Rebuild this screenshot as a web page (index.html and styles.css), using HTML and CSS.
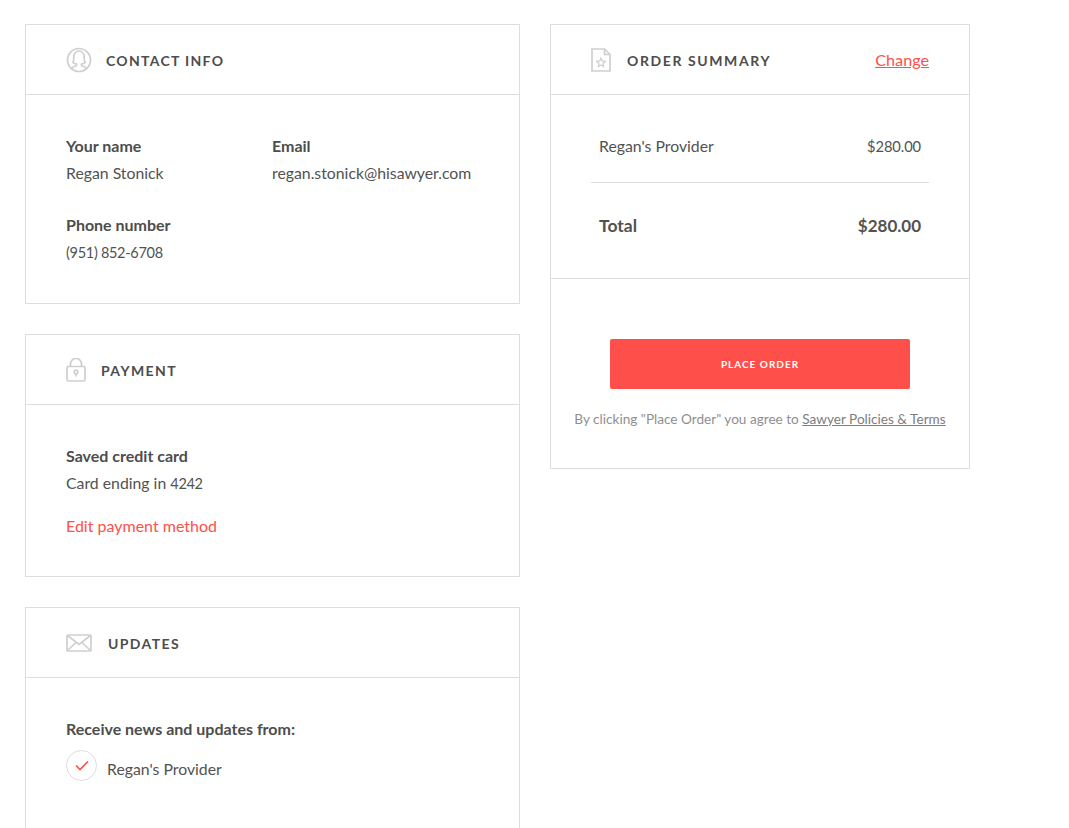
FILE: index.html
```html
<!DOCTYPE html>
<html lang="en">
<head>
<meta charset="utf-8">
<title>Checkout</title>
<link rel="stylesheet" href="styles.css">
</head>
<body>
<main class="layout">
  <div class="col col-left">
    <section class="card card-contact">
      <header class="card-head head-contact">
        <svg class="icon" width="26" height="26" viewBox="0 0 26 26" fill="none" stroke="#cfcfcf" stroke-width="1.7"><circle cx="13" cy="13" r="11.500"/><path d="M5.500 22.500c.2-2 2-3 5-3.800v-1.700c-1.800-.2-3-.7-3.700-1.500 1-1 1-3 1-5C7.800 6.500 10 4 13 4s5.200 2.500 5.200 6.500c0 2 0 4 1 5-.7.8-1.900 1.300-3.700 1.500v1.700c3 .8 4.800 1.800 5 3.800"/></svg>
        <h2 class="card-title">CONTACT INFO</h2>
      </header>
      <div class="card-body body-contact">
        <div class="info-grid">
          <div class="field">
            <div class="label">Your name</div>
            <div class="value">Regan Stonick</div>
          </div>
          <div class="field">
            <div class="label">Email</div>
            <div class="value">regan.stonick@hisawyer.com</div>
          </div>
          <div class="field">
            <div class="label">Phone number</div>
            <div class="value"><span class="num">(951) 852-6708</span></div>
          </div>
        </div>
      </div>
    </section>

    <section class="card card-payment">
      <header class="card-head head-payment">
        <svg class="icon" width="20" height="24" viewBox="0 0 20 24" fill="none" stroke="#cfcfcf" stroke-width="1.7"><rect x="1" y="8.500" width="18" height="14.500" rx="1.500"/><path d="M4.500 8.500V6a5.500 5.500 0 0 1 11 0v2.500"/><circle cx="10" cy="14" r="1.800"/><path d="M10 15.800v2.700"/></svg>
        <h2 class="card-title">PAYMENT</h2>
      </header>
      <div class="card-body body-payment">
        <div class="label">Saved credit card</div>
        <div class="value">Card ending in <span class="num">4242</span></div>
        <a class="edit-link" href="#">Edit payment method</a>
      </div>
    </section>

    <section class="card card-updates">
      <header class="card-head head-updates">
        <svg class="icon" width="26" height="18" viewBox="0 0 26 18" fill="none" stroke="#cfcfcf" stroke-width="1.7"><rect x="1" y="1" width="24" height="16" rx="1"/><path d="M1.500 1.500 13 10.500l11.500-9M1.500 16.500l8.500-8M24.500 16.500l-8.500-8"/></svg>
        <h2 class="card-title">UPDATES</h2>
      </header>
      <div class="card-body body-updates">
        <div class="label">Receive news and updates from:</div>
        <div class="check-row">
          <span class="check">
            <svg width="14" height="11" viewBox="0 0 14 11" fill="none" stroke="#ff4f4a" stroke-width="1.700"><path d="M1 5.500 5 9.500 13 1.500"/></svg>
          </span>
          <span class="value check-text">Regan's Provider</span>
        </div>
      </div>
    </section>
  </div>

  <div class="col col-right">
    <section class="card card-order">
      <header class="card-head head-order">
        <svg class="icon" width="20" height="24" viewBox="0 0 20 24" fill="none" stroke="#cfcfcf" stroke-width="1.700"><path d="M1 1h12.500L19 6.500V23H1z"/><path d="M13.500 1v5.500H19"/><path d="m10 10.300 1.300 2.700 3 .4-2.200 2.100.5 3L10 17l-2.600 1.500.5-3-2.200-2.100 3-.4z" stroke-width="1.300"/></svg>
        <h2 class="card-title">ORDER SUMMARY</h2>
        <a class="change-link" href="#">Change</a>
      </header>
      <div class="order-lines">
        <div class="line-item">
          <span>Regan's Provider</span>
          <span class="price">$280.00</span>
        </div>
        <div class="line-total">
          <span>Total</span>
          <span class="total-price">$280.00</span>
        </div>
      </div>
      <div class="order-action">
        <button class="place-order" type="button">PLACE ORDER</button>
        <p class="terms">By clicking "Place Order" you agree to <a href="#">Sawyer Policies &amp; Terms</a></p>
      </div>
    </section>
  </div>
</main>
</body>
</html>
```
FILE: styles.css
```css
* { box-sizing: border-box; }

html, body { height: 100%; overflow: hidden; }

body {
  margin: 0;
  background: #fff;
  color: #525252;
  font-family: "Lato", "Open Sans", sans-serif;
  font-size: 15.800px;
}

.layout {
  display: flex;
  align-items: flex-start;
  gap: 30px;
  padding: 24px 0 0 25px;
}

.col { display: flex; flex-direction: column; gap: 30px; }
.col-left { width: 495px; }
.col-right { width: 420px; }

.card { border: 1px solid #e0dedb; background: #fff; }

.card-head {
  display: flex;
  align-items: center;
  height: 70px;
  padding: 0 40px;
  border-bottom: 1px solid #e0dedb;
}

.head-contact .icon { margin-right: 14px; }
.head-payment .icon { margin-right: 15px; }
.head-updates .icon { margin-right: 16px; }
.head-order .icon { margin-right: 16px; }

.card-title {
  margin: 0;
  padding-top: 1px;
  font-size: 14px;
  font-weight: 700;
  letter-spacing: 1.400px;
  color: #4d4d4d;
}

.head-contact .card-title { letter-spacing: 1.300px; }
.head-order .card-title { letter-spacing: 1.600px; }

.card-body { padding: 37px 40px 0; }

.body-contact { height: 208px; }
.body-payment { height: 171px; }
.body-updates { height: 160px; }

.info-grid {
  display: grid;
  grid-template-columns: 206px 1fr;
  row-gap: 25px;
}

.label { font-size: 16px; font-weight: 700; line-height: 27px; color: #4d4d4d; }
.value { line-height: 27px; color: #525252; }

.num { font-size: 14.500px; letter-spacing: -0.300px; }

.edit-link {
  display: block;
  margin-top: 15px;
  font-size: 16px;
  line-height: 27px;
  color: #ff4f4a;
  text-decoration: none;
}

.check-row {
  display: flex;
  align-items: flex-start;
  gap: 10px;
  margin-top: 8px;
}

.check {
  display: flex;
  align-items: center;
  justify-content: center;
  width: 31px;
  height: 31px;
  border: 1px solid #dedede;
  border-radius: 50%;
}

.check-text { padding-top: 5px; }

.change-link {
  margin-left: auto;
  font-size: 16.200px;
  color: #ff4f4a;
  text-decoration: underline;
}

.order-lines { padding: 0 40px; border-bottom: 1px solid #e0dedb; height: 184px; }

.line-item,
.line-total {
  display: flex;
  justify-content: space-between;
  padding: 0 8px;
}

.line-item {
  height: 88px;
  align-items: center;
  padding-top: 14px;
  border-bottom: 1px solid #e0dedb;
}

.price { font-size: 14.700px; letter-spacing: -0.100px; }

.line-total {
  height: 86px;
  align-items: center;
  padding-bottom: 2px;
  font-size: 17.500px;
  font-weight: 700;
}

.total-price { font-size: 17px; }

.order-action {
  display: flex;
  flex-direction: column;
  align-items: center;
  height: 189px;
  padding-top: 60px;
}

.place-order {
  width: 300px;
  height: 50px;
  border: 0;
  border-radius: 2px;
  background: #ff4f4a;
  color: #fff;
  font-family: inherit;
  font-size: 10px;
  font-weight: 700;
  letter-spacing: 1px;
}

.terms {
  margin: 21px 0 0;
  font-size: 13.600px;
  line-height: 18px;
  color: #8f8f8f;
}

.terms a { color: #7d7d7d; text-decoration: underline; }
```
